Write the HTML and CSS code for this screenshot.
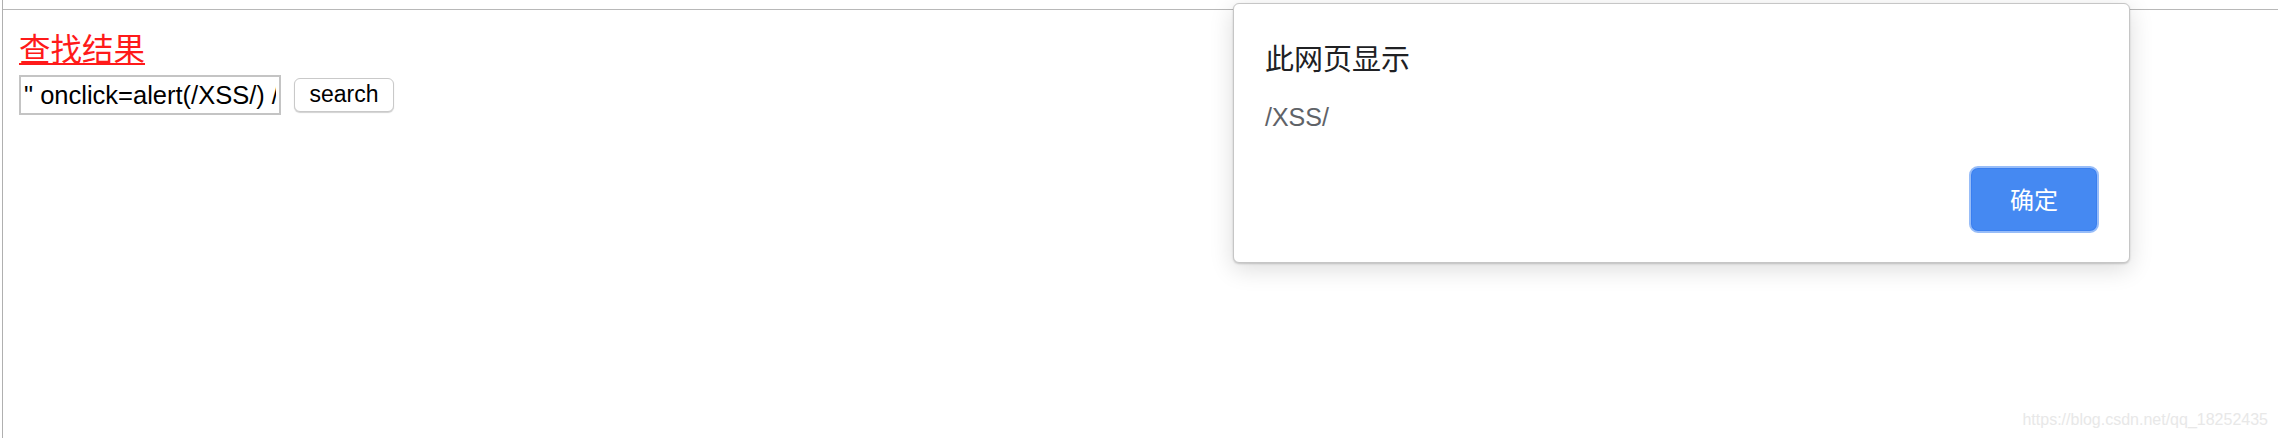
FILE: index.html
```html
<!DOCTYPE html>
<html lang="zh-CN">
<head>
<meta charset="utf-8">
<title>XSS</title>
<link rel="stylesheet" href="styles.css">
</head>
<body>
<div class="frame">
  <div class="topline"></div>
  <div class="content">
    <a class="title" href="#">查找结果</a>
    <form class="search-form">
      <input class="search-input" type="text" value="&quot; onclick=alert(/XSS/) //">
      <button class="search-btn" type="button">search</button>
    </form>
  </div>
</div>

<div class="dialog">
  <div class="dialog-title">此网页显示</div>
  <div class="dialog-msg">/XSS/</div>
  <div class="dialog-actions">
    <button class="ok-btn" type="button">确定</button>
  </div>
</div>

<div class="watermark">https://blog.csdn.net/qq_18252435</div>
</body>
</html>
```

FILE: styles.css
```css
html, body {
  margin: 0;
  padding: 0;
  background: #ffffff;
  height: 438px;
  overflow: hidden;
}

body {
  font-family: "Liberation Sans", "Noto Sans CJK SC", Arial, sans-serif;
  position: relative;
}

.frame {
  margin-left: 2px;
  border-left: 1px solid #b0b0b0;
  height: 438px;
  box-sizing: border-box;
}

.topline {
  height: 9px;
  border-bottom: 1px solid #b8b8b8;
}

.content {
  padding: 17px 0 0 16px;
}

.title {
  display: inline-block;
  font-family: "Noto Sans CJK SC", sans-serif;
  font-size: 31.5px;
  line-height: 40px;
  color: #ff1a1a;
  text-decoration: underline;
  text-decoration-thickness: 2px;
  text-underline-offset: 2px;
}

.search-form {
  display: flex;
  align-items: center;
  gap: 13px;
  margin-top: 8px;
}

.search-input {
  width: 262px;
  height: 40px;
  box-sizing: border-box;
  border: 2px solid #c4c4c4;
  padding: 0 3px;
  margin: 0;
  font-family: "Liberation Sans", Arial, sans-serif;
  font-size: 25.5px;
  color: #000000;
  background: #ffffff;
  outline: none;
}

.search-btn {
  width: 100px;
  height: 34px;
  box-sizing: border-box;
  border: 1px solid #c9c9c9;
  border-radius: 6px;
  background: #ffffff;
  box-shadow: 0 1px 1px rgba(0, 0, 0, 0.18);
  font-family: "Liberation Sans", Arial, sans-serif;
  font-size: 23px;
  color: #000000;
  padding: 0 0 2px 0;
  margin: 0;
}

.dialog {
  position: absolute;
  left: 1233px;
  top: 3px;
  width: 897px;
  height: 260px;
  box-sizing: border-box;
  background: #ffffff;
  border: 1px solid #c6c6c6;
  border-radius: 6px;
  box-shadow: 0 6px 24px rgba(0, 0, 0, 0.14), 0 1px 2px rgba(0, 0, 0, 0.18);
  padding: 33px 30px 29px 31px;
  display: flex;
  flex-direction: column;
}

.dialog-title {
  font-family: "Noto Sans CJK SC", sans-serif;
  font-size: 29px;
  line-height: 40px;
  color: #202124;
}

.dialog-msg {
  margin-top: 25px;
  font-family: "Liberation Sans", Arial, sans-serif;
  font-size: 25px;
  line-height: 30px;
  color: #5f6368;
}

.dialog-actions {
  margin-top: auto;
  display: flex;
  justify-content: flex-end;
}

.ok-btn {
  width: 130px;
  height: 67px;
  box-sizing: border-box;
  border: 2px solid #98bdf8;
  border-radius: 9px;
  background: #4589f2;
  box-shadow: inset 0 0 0 1px #3a7ff0;
  color: #ffffff;
  font-family: "Noto Sans CJK SC", sans-serif;
  font-size: 24px;
  padding: 0 0 2px 0;
  margin: 0;
}

.watermark {
  position: absolute;
  right: 10px;
  bottom: 9px;
  font-family: "Liberation Sans", Arial, sans-serif;
  font-size: 16px;
  color: #e8e8e8;
}
```
